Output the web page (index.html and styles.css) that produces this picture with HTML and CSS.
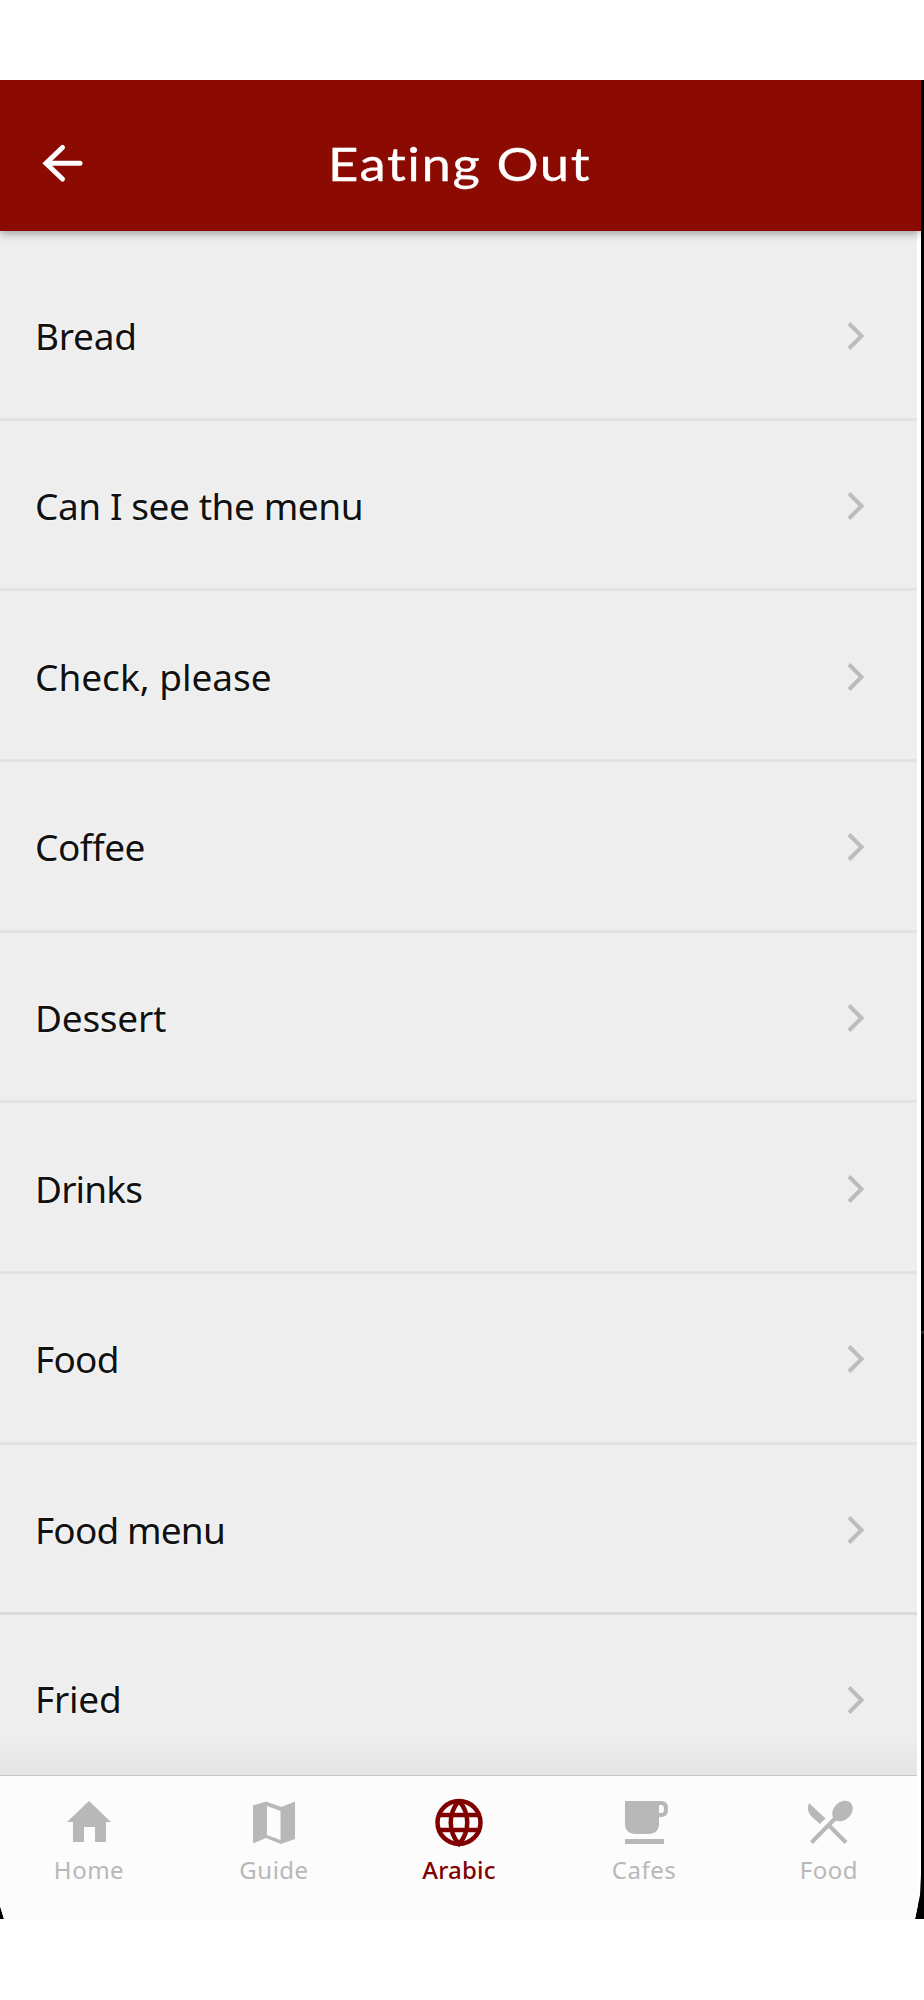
FILE: index.html
```html
<!DOCTYPE html>
<html lang="en">
<head>
<meta charset="utf-8">
<title>Eating Out</title>
<link rel="stylesheet" href="styles.css">
</head>
<body>
<div class="device">
  <div class="screen">
    <header class="topbar">
      <svg class="back" viewBox="0 0 44 44" width="44" height="44"><path d="M21.5 6.500 5 22.300 21.500 38M5 22.300h34" /></svg>
      <h1 class="title"><span>Eating Out</span></h1>
    </header>
    <main class="list">
      <div class="row first"><span class="t-bread">Bread</span><svg class="chev" viewBox="0 0 20 30" width="20" height="30"><path d="M3 2.500 15.500 15 3 27.500"/></svg></div>
      <div class="row"><span class="t-menu">Can I see the menu</span><svg class="chev" viewBox="0 0 20 30" width="20" height="30"><path d="M3 2.500 15.500 15 3 27.500"/></svg></div>
      <div class="row"><span class="t-check">Check, please</span><svg class="chev" viewBox="0 0 20 30" width="20" height="30"><path d="M3 2.500 15.500 15 3 27.500"/></svg></div>
      <div class="row"><span class="t-coffee">Coffee</span><svg class="chev" viewBox="0 0 20 30" width="20" height="30"><path d="M3 2.500 15.500 15 3 27.500"/></svg></div>
      <div class="row"><span class="t-dessert">Dessert</span><svg class="chev" viewBox="0 0 20 30" width="20" height="30"><path d="M3 2.500 15.500 15 3 27.500"/></svg></div>
      <div class="row"><span class="t-drinks">Drinks</span><svg class="chev" viewBox="0 0 20 30" width="20" height="30"><path d="M3 2.500 15.500 15 3 27.500"/></svg></div>
      <div class="row"><span class="t-food">Food</span><svg class="chev" viewBox="0 0 20 30" width="20" height="30"><path d="M3 2.500 15.500 15 3 27.500"/></svg></div>
      <div class="row strong"><span class="t-foodmenu">Food menu</span><svg class="chev" viewBox="0 0 20 30" width="20" height="30"><path d="M3 2.500 15.500 15 3 27.500"/></svg></div>
      <div class="row last"><span class="t-fried">Fried</span><svg class="chev" viewBox="0 0 20 30" width="20" height="30"><path d="M3 2.500 15.500 15 3 27.500"/></svg></div>
    </main>
    <nav class="tabs">
      <div class="tab">
        <svg viewBox="0 0 48 50" width="48" height="50"><path fill="currentColor" d="M24 3 46 24h-5v20H30V29H19v15H8V24H2z"/></svg>
        <span>Home</span>
      </div>
      <div class="tab">
        <svg viewBox="0 0 48 50" width="48" height="50"><path fill="currentColor" fill-rule="evenodd" d="M3 7.500 16 3.500 31.500 9 45 3.500V41l-14 5-15-6-13 5.500zM17 8v29l13.500 5V13z"/></svg>
        <span>Guide</span>
      </div>
      <div class="tab active">
        <svg viewBox="0 0 48 50" width="48" height="50"><g fill="none" stroke="currentColor" stroke-width="4.500"><circle cx="24" cy="24.500" r="21.500"/><path d="M24 3C13 15 13 34 24 46C35 34 35 15 24 3M5 17h38M5 32h38"/></g></svg>
        <span>Arabic</span>
      </div>
      <div class="tab">
        <svg viewBox="0 0 48 50" width="48" height="50"><path fill="currentColor" fill-rule="evenodd" d="M5 3h36q7 0 7 7v2q0 7-7 7h-2v6q0 11-11 11H16Q5 36 5 25zM39 7v8h2.500q2.500 0 2.500-4t-2.500-4zM5 41h39v5H5z"/></svg>
        <span>Cafes</span>
      </div>
      <div class="tab">
        <svg viewBox="0 0 48 50" width="48" height="50"><path fill="currentColor" d="M4 5 20.500 20.500 15 26 6 18Q1 12 4 5z"/><ellipse cx="37.500" cy="13" rx="11.500" ry="9" fill="currentColor" transform="rotate(-45 37.500 13)"/><path d="M32 18.500 6.500 44.500M23.500 27 41 44.500" fill="none" stroke="currentColor" stroke-width="4"/></svg>
        <span>Food</span>
      </div>
    </nav>
  </div>
</div>
</body>
</html>
```
FILE: styles.css
```css
* { box-sizing: border-box; }
body { margin: 0; padding-top: 80px; height: 2000px; background: #fff; font-family: "Noto Sans", sans-serif; }
.device { height: 1839px; background: linear-gradient(#000 1250px, #333 1252px, #000 1255px); }
.screen { width: 921px; height: 1839px; display: flex; flex-direction: column; background: #fff; clip-path: polygon(0 0, 100% 0, 100% 1795px, 920px 1815px, 915px 100%, 4px 100%, 0 1826px); }
.topbar { position: relative; z-index: 1; flex: none; height: 151px; padding: 14px 0 0; display: flex; align-items: center; background: #8b0b02; box-shadow: 0 3px 8px rgba(0,0,0,.3); clip-path: inset(0 0 -14px 0); }
.back { margin-left: 41px; flex: none; fill: none; stroke: #fff; stroke-width: 5; stroke-linecap: round; }
.title { flex: 1; margin: 0 86px 0 0; text-align: center; font: 400 47px/60px Lato, sans-serif; color: #fff; }
.title span { display: inline-block; transform: scaleX(1.12); letter-spacing: 1.4px; -webkit-text-stroke: .3px #fff; }
.list { flex: none; width: 917px; height: 1545px; overflow: hidden; background: #eee; }
.row { height: 170.7px; padding: 3px 51px 0 35px; display: flex; align-items: center; justify-content: space-between; border-bottom: 3px solid #e3e3e3; color: #111; font-size: 37px; line-height: 54px; white-space: nowrap; }
.row span { text-shadow: 0 0 3px #fff; }
.first { height: 189.500px; padding-top: 24px; }
.strong { border-color: #dadada; }
.last { height: 161px; align-items: flex-start; padding-top: 57px; background: linear-gradient(#eee 75%, #e5e5e5); border-bottom: 1px solid #c9c9c9; }
.last .chev { margin-top: 13px; }
.t-bread, .t-dessert, .t-fried { letter-spacing: -.25px; }
.t-menu { letter-spacing: -.42px; }
.t-coffee { letter-spacing: -.5px; }
.t-food { letter-spacing: -.75px; }
.t-drinks, .t-foodmenu { letter-spacing: -.85px; }
.chev { flex: none; fill: none; stroke: #bcbcbc; stroke-width: 4; }
.tabs { flex: none; height: 143px; width: 918px; padding-top: 22px; display: flex; justify-content: center; background: #fcfcfc; color: #b8b8b8; }
.tab { flex: none; width: 185px; display: flex; flex-direction: column; align-items: center; font-size: 24px; line-height: 32px; gap: 6px; }
.tab span { white-space: nowrap; letter-spacing: .5px; }
.active { color: #800000; }
.active span { font-weight: 500; letter-spacing: .2px; }
```
